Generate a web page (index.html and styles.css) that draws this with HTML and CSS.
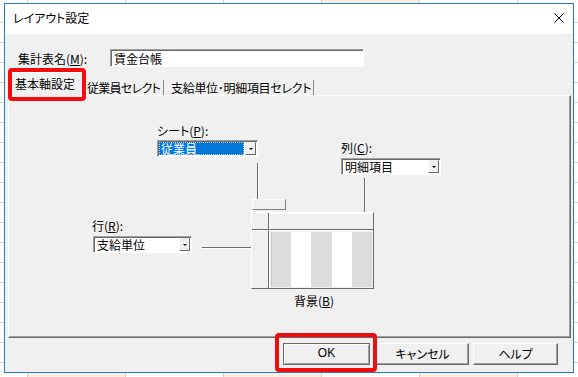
FILE: index.html
```html
<!DOCTYPE html>
<html lang="ja">
<head>
<meta charset="utf-8">
<link rel="stylesheet" href="styles.css">
</head>
<body>
<div class="screen">
  <div class="strip-top">
    <div class="cell cell-first"></div>
    <div class="cell"></div>
    <div class="cell"></div>
    <div class="cell"></div>
    <div class="cell cream"></div>
    <div class="cell"></div>
  </div>
  <div class="mid">
    <div class="side"></div>
    <div class="window">
      <div class="titlebar">
        <span class="title">レイアウト設定</span>
        <svg class="close" width="10" height="10" viewBox="0 0 10 10"><path d="M0.5 0.5L9.5 9.5M9.5 0.5L0.5 9.5" stroke="#000" stroke-width="1" fill="none"/></svg>
      </div>
      <div class="client">
        <div class="name-row">
          <span class="name-label">集計表名(<u>M</u>):</span>
          <div class="textbox">賃金台帳</div>
        </div>
        <div class="tabs">
          <div class="tab active">基本軸設定</div>
          <div class="tab tab2">従業員セレクト</div>
          <div class="tab tab3">支給単位･明細項目セレクト</div>
        </div>
        <div class="panel">
          <span class="lbl lbl-sheet">シート(<u>P</u>):</span>
          <div class="combo combo-sheet">
            <span class="combo-value selected">従業員</span>
            <span class="combo-btn"><i class="tri"></i></span>
          </div>
          <span class="lbl lbl-col">列(<u>C</u>):</span>
          <div class="combo combo-col">
            <span class="combo-value">明細項目</span>
            <span class="combo-btn"><i class="tri"></i></span>
          </div>
          <span class="lbl lbl-row">行(<u>R</u>):</span>
          <div class="combo combo-row">
            <span class="combo-value">支給単位</span>
            <span class="combo-btn"><i class="tri"></i></span>
          </div>
          <div class="vline vline-sheet"></div>
          <div class="sheet-tab"></div>
          <div class="vline vline-col"></div>
          <div class="hline hline-row"></div>
          <div class="grid-box">
            <div class="g-corner"></div>
            <div class="g-colhead"></div>
            <div class="g-rowhead"></div>
            <div class="g-data"><div class="stripes"></div></div>
          </div>
          <span class="lbl lbl-bg">背景(<u>B</u>)</span>
        </div>
        <div class="buttons">
          <div class="btn btn-ok">OK</div>
          <div class="btn btn-cancel">キャンセル</div>
          <div class="btn btn-help">ヘルプ</div>
        </div>
      </div>
      <div class="mark mark-tab"></div>
      <div class="mark mark-ok"></div>
    </div>
    <div class="side"></div>
  </div>
  <div class="strip-bottom"></div>
</div>
</body>
</html>
```

FILE: styles.css
```css
* { box-sizing: border-box; }
html, body { margin: 0; padding: 0; }
body {
  font-family: "Noto Sans CJK JP", "Noto Sans", sans-serif;
  font-size: 12px;
  color: #000;
  font-feature-settings: "palt";
  background: #fff;
}
u { text-decoration: underline; text-underline-offset: 1px; }

.screen {
  width: 578px;
  height: 377px;
  display: flex;
  flex-direction: column;
  background: #fff;
  overflow: hidden;
}

/* spreadsheet remnants */
.strip-top {
  height: 3px;
  flex: none;
  display: flex;
  overflow: hidden;
}
.cell {
  width: 98px;
  flex: none;
  height: 3px;
  border-right: 1px solid #d0d0d0;
}
.cell-first { width: 28px; }
.cell.cream { background: #fbeedf; }

.mid { display: flex; height: 370px; flex: none; }
.side {
  width: 4px;
  flex: none;
  background: repeating-linear-gradient(to bottom, #fff 0 19px, #d6d6d6 19px 20px);
}
.strip-bottom {
  height: 4px;
  flex: none;
  background: linear-gradient(to right,
    #fff 0 27px, #d0d0d0 27px 28px,
    #fbeedf 28px 125px, #d0d0d0 125px 126px,
    #fff 126px 223px, #d0d0d0 223px 224px,
    #fbeedf 224px 321px, #d0d0d0 321px 322px,
    #fff 322px 419px, #d0d0d0 419px 420px,
    #fbeedf 420px 517px, #d0d0d0 517px 518px,
    #fff 518px 578px);
}

.window {
  width: 570px;
  height: 370px;
  flex: none;
  border: 1px solid #2a7bbd;
  background: #f0f0f0;
  position: relative;
  display: flex;
  flex-direction: column;
}
.titlebar {
  height: 30px;
  flex: none;
  background: #fff;
  display: flex;
  align-items: center;
  justify-content: space-between;
  padding: 0 9px 2px 8px;
}
.title { line-height: 14px; }
.close { display: block; }

.client {
  flex: 1;
  display: flex;
  flex-direction: column;
  padding: 15px 2px 0 3px;
}
.name-row {
  display: flex;
  align-items: center;
  height: 18px;
  margin-left: 10px;
}
.name-label { width: 92px; line-height: 14px; padding-top: 2px; white-space: nowrap; }
.textbox {
  width: 254px;
  height: 18px;
  background: #fff;
  border: 1px solid;
  border-color: #a0a0a0 #fff #fff #a0a0a0;
  box-shadow: inset 1px 1px #696969;
  padding: 1px 0 0 3px;
  line-height: 15px;
}

.tabs {
  display: flex;
  align-items: flex-end;
  height: 23px;
  margin-top: 5px;
  position: relative;
  z-index: 1;
  white-space: nowrap;
}
.tab {
  height: 15px;
  line-height: 15px;
  border-right: 1px solid #8a8a8a;
}
.tab.active {
  align-self: stretch;
  height: 24px;
  margin-bottom: -1px;
  margin-left: 2px;
  width: 74px;
  background: #f0f0f0;
  border-top: 1px solid #fff;
  border-left: 1px solid #fff;
  border-right: 1px solid #696969;
  padding: 4px 0 0 4px;
  line-height: 14px;
}
.tab2 { width: 80px; padding-left: 3px; letter-spacing: -0.7px; }
.tab3 { width: 150px; padding-left: 7px; letter-spacing: -0.3px; }

.panel {
  height: 243px;
  flex: none;
  position: relative;
  border: 1px solid;
  border-color: #fff #696969 #696969 #fff;
  box-shadow: inset -1px -1px #a0a0a0;
}

/* diagram (free canvas) */
.lbl { position: absolute; line-height: 14px; white-space: nowrap; }
.lbl-sheet { left: 148px; top: 28px; }
.lbl-col { left: 332px; top: 45px; }
.lbl-row { left: 83px; top: 123px; }
.lbl-bg { left: 285px; top: 198px; }

.combo {
  position: absolute;
  height: 17px;
  background: #fff;
  border: 1px solid;
  border-color: #a0a0a0 #fff #fff #a0a0a0;
  box-shadow: inset 1px 1px #696969;
  display: flex;
  padding: 0;
}
.combo-sheet { left: 148px; top: 44px; width: 101px; }
.combo-col { left: 332px; top: 62px; width: 100px; }
.combo-row { left: 84px; top: 140px; width: 99px; }
.combo-value {
  flex: 1;
  line-height: 15px;
  padding-left: 3px;
  white-space: nowrap;
}
.combo-value.selected {
  background: #0078d7;
  color: #fff;
  outline: 1px dotted #c8c8c8;
  outline-offset: -1px;
  margin: 1px 1px 1px 1px;
  line-height: 13px;
  padding-left: 2px;
}
.combo-btn {
  width: 11px;
  flex: none;
  margin: 1px 1px 1px 0;
  background: #f0f0f0;
  border: 1px solid;
  border-color: #f0f0f0 #696969 #696969 #fff;
  display: flex;
  align-items: center;
  justify-content: center;
}
.tri {
  display: block;
  width: 0;
  height: 0;
  border-left: 2px solid transparent;
  border-right: 2px solid transparent;
  border-top: 2px solid #000;
}

.vline {
  position: absolute;
  width: 1px;
  background: #6a6a6a;
  box-shadow: 1px 0 #fff;
}
.vline-sheet { left: 248px; top: 67px; height: 36px; }
.vline-col { left: 355px; top: 82px; height: 34px; }
.hline {
  position: absolute;
  height: 1px;
  background: #6a6a6a;
  box-shadow: 0 1px #fff;
}
.hline-row { left: 193px; top: 151px; width: 49px; }

.sheet-tab {
  position: absolute;
  left: 243px;
  top: 103px;
  width: 34px;
  height: 11px;
  background: #f0f0f0;
  border: 1px solid;
  border-color: #fff #808080 #808080 #fff;
}

.grid-box {
  position: absolute;
  left: 242px;
  top: 116px;
  width: 123px;
  height: 77px;
  border: 1px solid;
  border-color: #fff #696969 #696969 #fff;
  display: grid;
  grid-template-columns: 17px 1fr;
  grid-template-rows: 17px 1fr;
}
.g-corner { border-right: 1px solid #696969; border-bottom: 1px solid #696969; }
.g-colhead { border-left: 1px solid #fff; border-bottom: 1px solid #696969; border-top: 1px solid #fff; }
.g-rowhead { border-right: 1px solid #696969; border-top: 1px solid #fff; }
.g-data { border-left: 1px solid #fff; border-top: 1px solid #fff; padding: 1px 1px 1px 1px; }
.stripes {
  width: 100%;
  height: 100%;
  background: linear-gradient(to right,
    #dcdcdc 0 20%, #fff 20% 40%, #dcdcdc 40% 60%, #fff 60% 80%, #dcdcdc 80% 100%);
  box-shadow: inset 1px 0 #c8c8c8;
}

.buttons {
  display: flex;
  justify-content: flex-end;
  margin-top: 5px;
  margin-right: 13px;
}
.btn {
  height: 22px;
  text-align: center;
  line-height: 19px;
  background: #f0f0f0;
  border: 1px solid;
  border-color: #fff #696969 #696969 #fff;
  box-shadow: inset -1px -1px #a0a0a0;
  white-space: nowrap;
}
.btn-ok {
  width: 87px;
  margin-right: 6px;
  border-color: #696969;
  box-shadow: inset 1px 1px #fff, inset -1px -1px #a0a0a0;
  font-family: "Liberation Sans", "Noto Sans CJK JP", sans-serif;
}
.btn-cancel { width: 93px; margin-right: 4px; }
.btn-help { width: 85px; }

/* red highlight annotations */
.mark {
  position: absolute;
  border: 4px solid #f20c0c;
  border-radius: 4px;
  z-index: 5;
}
.mark-tab { left: 3px; top: 64px; width: 78px; height: 33px; }
.mark-ok { left: 270px; top: 329px; width: 102px; height: 39px; }
```
